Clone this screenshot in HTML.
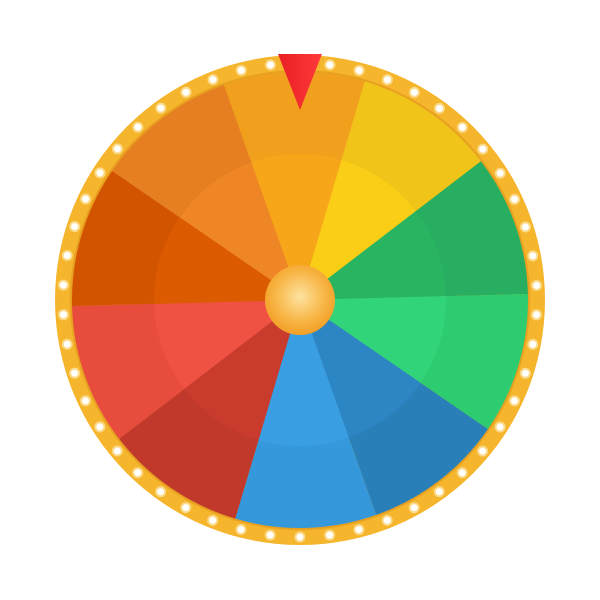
<!DOCTYPE html>
<html><head><style>html,body{margin:0;padding:0;background:#fff;width:600px;height:600px;overflow:hidden}</style></head>
<body>
<svg width="600" height="600" viewBox="0 0 600 600" xmlns="http://www.w3.org/2000/svg">
<defs>
<radialGradient id="hub" cx="0.5" cy="0.45" r="0.6">
<stop offset="0" stop-color="#fde3a0"/><stop offset="0.6" stop-color="#f8b545"/><stop offset="1" stop-color="#f09a1e"/>
</radialGradient>
<linearGradient id="ptr" x1="0" x2="1"><stop offset="0" stop-color="#e81e25"/><stop offset="1" stop-color="#ff3a3a"/></linearGradient>
</defs>
<circle cx="300" cy="300" r="245" fill="#f5b52c"/>
<circle cx="300" cy="300" r="230" fill="#e8a020"/>
<g transform="rotate(-1.5 300 300)">
<path d="M300,300 L229.55,83.15 A228,228 0 0 1 370.45,83.15 Z" fill="#F0A01C"/>
<path d="M300,300 L370.45,83.15 A228,228 0 0 1 484.45,165.98 Z" fill="#F0C419"/>
<path d="M300,300 L484.45,165.98 A228,228 0 0 1 528,300 Z" fill="#27AE60"/>
<path d="M300,300 L528,300 A228,228 0 0 1 484.45,434.02 Z" fill="#2ECC71"/>
<path d="M300,300 L484.45,434.02 A228,228 0 0 1 370.45,516.85 Z" fill="#2980B9"/>
<path d="M300,300 L370.45,516.85 A228,228 0 0 1 229.55,516.85 Z" fill="#3498DB"/>
<path d="M300,300 L229.55,516.85 A228,228 0 0 1 115.55,434.02 Z" fill="#C0392B"/>
<path d="M300,300 L115.55,434.02 A228,228 0 0 1 72,300 Z" fill="#E74C3C"/>
<path d="M300,300 L72,300 A228,228 0 0 1 115.55,165.98 Z" fill="#D35400"/>
<path d="M300,300 L115.55,165.98 A228,228 0 0 1 229.55,83.15 Z" fill="#E67E22"/>

<path d="M300,300 L254.88,161.14 A146,146 0 0 1 345.12,161.14 Z" fill="#F7A519"/>
<path d="M300,300 L345.12,161.14 A146,146 0 0 1 418.11,214.18 Z" fill="#FACD17"/>
<path d="M300,300 L418.11,214.18 A146,146 0 0 1 446,300 Z" fill="#29B462"/>
<path d="M300,300 L446,300 A146,146 0 0 1 418.11,385.82 Z" fill="#32D47A"/>
<path d="M300,300 L418.11,385.82 A146,146 0 0 1 345.12,438.86 Z" fill="#2D86C4"/>
<path d="M300,300 L345.12,438.86 A146,146 0 0 1 254.88,438.86 Z" fill="#3A9EE2"/>
<path d="M300,300 L254.88,438.86 A146,146 0 0 1 181.89,385.82 Z" fill="#C83B2D"/>
<path d="M300,300 L181.89,385.82 A146,146 0 0 1 154,300 Z" fill="#EF5142"/>
<path d="M300,300 L154,300 A146,146 0 0 1 181.89,214.18 Z" fill="#DC5A00"/>
<path d="M300,300 L181.89,214.18 A146,146 0 0 1 254.88,161.14 Z" fill="#EE8625"/>
</g>
<circle cx="300" cy="300" r="237" fill="none" stroke="#fff3c8" stroke-opacity="0.6" stroke-width="11" stroke-linecap="round" stroke-dasharray="0 29.782" stroke-dashoffset="14.891"/>
<circle cx="300" cy="300" r="237" fill="none" stroke="#ffffff" stroke-width="7" stroke-linecap="round" stroke-dasharray="0 29.782" stroke-dashoffset="14.891"/>
<circle cx="300" cy="300" r="35" fill="url(#hub)"/>
<polygon points="278,54 322,54 300,110" fill="url(#ptr)"/>
</svg>
</body></html>
